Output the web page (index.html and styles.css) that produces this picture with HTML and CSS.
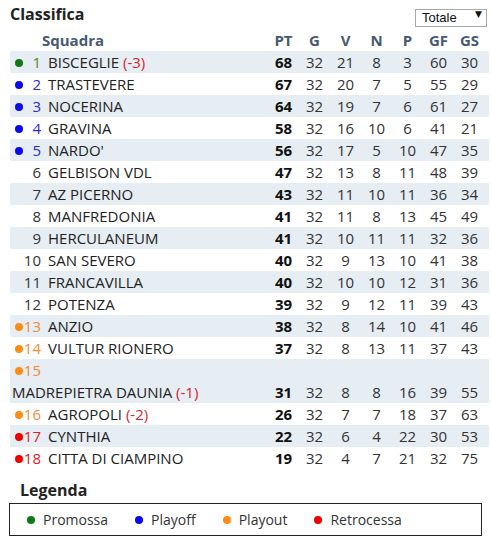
FILE: index.html
```html
<!DOCTYPE html>
<html lang="it">
<head>
<meta charset="utf-8">
<title>Classifica</title>
<link rel="stylesheet" href="styles.css">
</head>
<body>
<div class="topbar">
  <h2 class="title">Classifica</h2>
  <div class="select-wrap">
    <select class="select"><option>Totale</option><option>Casa</option><option>Trasferta</option></select>
    <span class="arrow">&#9660;</span>
  </div>
</div>
<table class="standings">
  <colgroup>
    <col class="c-team"><col class="c-n"><col class="c-n"><col class="c-n"><col class="c-n"><col class="c-n"><col class="c-n"><col class="c-last">
  </colgroup>
  <thead>
    <tr><th class="team">Squadra</th><th>PT</th><th>G</th><th>V</th><th>N</th><th>P</th><th>GF</th><th class="last">GS</th></tr>
  </thead>
  <tbody>
    <tr><td class="team"><span class="pos promo"><i class="dot"></i><span class="num">1</span></span>BISCEGLIE <span class="pen">(-3)</span></td><td class="pt">68</td><td>32</td><td>21</td><td>8</td><td>3</td><td>60</td><td class="last">30</td></tr>
    <tr><td class="team"><span class="pos playoff"><i class="dot"></i><span class="num">2</span></span>TRASTEVERE</td><td class="pt">67</td><td>32</td><td>20</td><td>7</td><td>5</td><td>55</td><td class="last">29</td></tr>
    <tr><td class="team"><span class="pos playoff"><i class="dot"></i><span class="num">3</span></span>NOCERINA</td><td class="pt">64</td><td>32</td><td>19</td><td>7</td><td>6</td><td>61</td><td class="last">27</td></tr>
    <tr><td class="team"><span class="pos playoff"><i class="dot"></i><span class="num">4</span></span>GRAVINA</td><td class="pt">58</td><td>32</td><td>16</td><td>10</td><td>6</td><td>41</td><td class="last">21</td></tr>
    <tr><td class="team"><span class="pos playoff"><i class="dot"></i><span class="num">5</span></span>NARDO'</td><td class="pt">56</td><td>32</td><td>17</td><td>5</td><td>10</td><td>47</td><td class="last">35</td></tr>
    <tr><td class="team"><span class="pos"><span class="num">6</span></span>GELBISON VDL</td><td class="pt">47</td><td>32</td><td>13</td><td>8</td><td>11</td><td>48</td><td class="last">39</td></tr>
    <tr><td class="team"><span class="pos"><span class="num">7</span></span>AZ PICERNO</td><td class="pt">43</td><td>32</td><td>11</td><td>10</td><td>11</td><td>36</td><td class="last">34</td></tr>
    <tr><td class="team"><span class="pos"><span class="num">8</span></span>MANFREDONIA</td><td class="pt">41</td><td>32</td><td>11</td><td>8</td><td>13</td><td>45</td><td class="last">49</td></tr>
    <tr><td class="team"><span class="pos"><span class="num">9</span></span>HERCULANEUM</td><td class="pt">41</td><td>32</td><td>10</td><td>11</td><td>11</td><td>32</td><td class="last">36</td></tr>
    <tr><td class="team"><span class="pos"><span class="num">10</span></span>SAN SEVERO</td><td class="pt">40</td><td>32</td><td>9</td><td>13</td><td>10</td><td>41</td><td class="last">38</td></tr>
    <tr><td class="team"><span class="pos"><span class="num">11</span></span>FRANCAVILLA</td><td class="pt">40</td><td>32</td><td>10</td><td>10</td><td>12</td><td>31</td><td class="last">36</td></tr>
    <tr><td class="team"><span class="pos"><span class="num">12</span></span>POTENZA</td><td class="pt">39</td><td>32</td><td>9</td><td>12</td><td>11</td><td>39</td><td class="last">43</td></tr>
    <tr><td class="team"><span class="pos playout"><i class="dot"></i><span class="num">13</span></span>ANZIO</td><td class="pt">38</td><td>32</td><td>8</td><td>14</td><td>10</td><td>41</td><td class="last">46</td></tr>
    <tr><td class="team"><span class="pos playout"><i class="dot"></i><span class="num">14</span></span>VULTUR RIONERO</td><td class="pt">37</td><td>32</td><td>8</td><td>13</td><td>11</td><td>37</td><td class="last">43</td></tr>
    <tr><td class="team wrap"><span class="pos playout"><i class="dot"></i><span class="num">15</span></span><span class="name">MADREPIETRA DAUNIA <span class="pen">(-1)</span></span></td><td class="pt">31</td><td>32</td><td>8</td><td>8</td><td>16</td><td>39</td><td class="last">55</td></tr>
    <tr><td class="team"><span class="pos playout"><i class="dot"></i><span class="num">16</span></span>AGROPOLI <span class="pen">(-2)</span></td><td class="pt">26</td><td>32</td><td>7</td><td>7</td><td>18</td><td>37</td><td class="last">63</td></tr>
    <tr><td class="team"><span class="pos relegated"><i class="dot"></i><span class="num">17</span></span>CYNTHIA</td><td class="pt">22</td><td>32</td><td>6</td><td>4</td><td>22</td><td>30</td><td class="last">53</td></tr>
    <tr><td class="team"><span class="pos relegated"><i class="dot"></i><span class="num">18</span></span>CITTA DI CIAMPINO</td><td class="pt">19</td><td>32</td><td>4</td><td>7</td><td>21</td><td>32</td><td class="last">75</td></tr>
  </tbody>
</table>
<h3 class="legend-title">Legenda</h3>
<div class="legend">
  <span class="legend-item promo"><i class="dot"></i>Promossa</span>
  <span class="legend-item playoff"><i class="dot"></i>Playoff</span>
  <span class="legend-item playout"><i class="dot"></i>Playout</span>
  <span class="legend-item relegated"><i class="dot"></i>Retrocessa</span>
</div>
</body>
</html>
```
FILE: styles.css
```css
html, body {
  margin: 0;
  padding: 0;
  background: #fff;
}
body {
  width: 491px;
  font-family: "Open Sans", "Noto Sans", sans-serif;
  color: #333;
}
.topbar {
  display: flex;
  align-items: center;
  justify-content: space-between;
  height: 27px;
  padding: 0 4px 2px 10px;
}
.title {
  margin: 0;
  font-size: 16px;
  font-weight: 700;
  color: #222;
  line-height: 20px;
}
.select-wrap {
  position: relative;
  width: 72px;
  height: 18px;
}
.select {
  appearance: none;
  -webkit-appearance: none;
  width: 100%;
  height: 18px;
  margin: 0;
  padding: 0 0 0 6px;
  border: 1px solid #a9a9a9;
  border-radius: 0;
  background: #fff;
  font-family: "Liberation Sans", Arial, sans-serif;
  font-size: 13px;
  color: #111;
  line-height: 16px;
}
.arrow {
  position: absolute;
  right: 5px;
  top: 4px;
  font-family: "DejaVu Sans", sans-serif;
  font-size: 9px;
  line-height: 10px;
  color: #111;
  pointer-events: none;
}
.standings {
  margin-left: 10px;
  width: 479px;
  border-collapse: collapse;
  table-layout: fixed;
  font-size: 15px;
}
.c-team { width: 258px; }
.c-n { width: 31px; }
.c-last { width: 35px; }
.standings th, .standings td {
  padding: 0;
  height: 22px;
  line-height: 22px;
  text-align: center;
  vertical-align: bottom;
  white-space: nowrap;
}
.standings th {
  font-weight: 700;
  color: #475b70;
}
.standings th.team {
  text-align: left;
  padding-left: 32px;
}
.standings td {
  color: #333;
}
.standings .last {
  padding-right: 4px;
}
.standings tbody tr:nth-child(odd) {
  background: #e6edf3;
}
.standings td.team {
  text-align: left;
  padding-left: 2px;
  color: #222;
}
.standings td.wrap {
  white-space: normal;
}
.standings td.wrap .name {
  display: block;
}
.standings td.pt {
  font-weight: 700;
  color: #111;
}
.pos {
  display: inline-flex;
  align-items: center;
  width: 29px;
  margin-right: 7px;
  vertical-align: top;
  height: 22px;
}
.pos .num {
  margin-left: auto;
  color: #333;
}
.dot {
  display: inline-block;
  width: 8px;
  height: 8px;
  border-radius: 50%;
  margin-left: 3px;
  margin-top: 1px;
}
.pen {
  color: #d9232e;
}
.promo .dot { background: #0f7a12; }
.promo .num { color: #4f8a1c; }
.playoff .dot { background: #0a0af0; }
.playoff .num { color: #2a2ad6; }
.playout .dot { background: #ff8c14; }
.playout .num { color: #f28a3c; }
.relegated .dot { background: #f00000; }
.relegated .num { color: #e0202a; }
.legend-title {
  margin: 11px 0 3px 20px;
  font-size: 16px;
  font-weight: 700;
  line-height: 20px;
  color: #222;
}
.legend {
  display: flex;
  align-items: center;
  margin-left: 9px;
  width: 454px;
  height: 31px;
  border: 1px solid #222;
  padding-left: 17px;
  box-sizing: content-box;
  font-size: 14px;
  color: #333;
}
.legend-item {
  display: inline-flex;
  align-items: center;
  margin-right: 27px;
}
.legend-item .dot {
  margin: 0 8px 0 0;
}
```
